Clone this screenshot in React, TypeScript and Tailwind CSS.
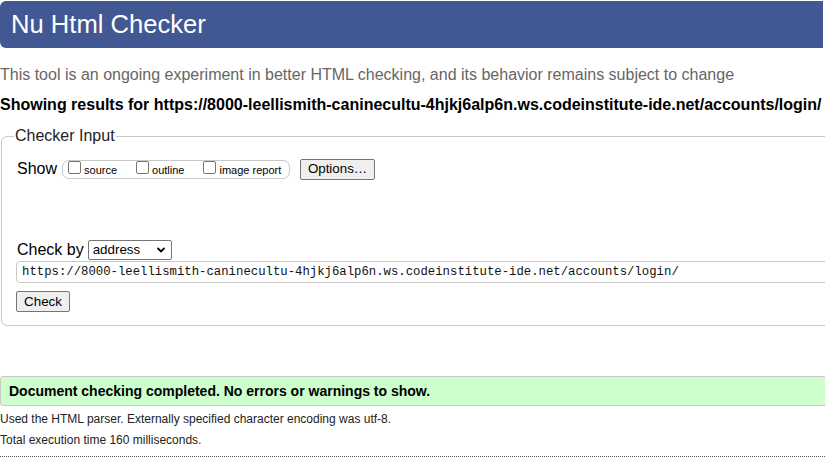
import React from "react";

export default function App() {
  const url =
    "https://8000-leellismith-caninecultu-4hjkj6alp6n.ws.codeinstitute-ide.net/accounts/login/";
  return (
    <div
      className="w-[825px] h-[458px] overflow-hidden bg-white text-black"
      style={{ fontFamily: '"Liberation Sans", Arial, sans-serif' }}
    >
      <div className="mt-[1px] h-[47px] w-[823px] rounded-l-[6px] bg-[#425892] pl-[11px] flex items-center">
        <h1 className="text-[25.6px] leading-none text-white">Nu Html Checker</h1>
      </div>

      <p className="mt-[18px] text-[16px] leading-[18px] text-[#666]">
        This tool is an ongoing experiment in better HTML checking, and its behavior remains subject to change
      </p>
      <p className="mt-[12px] text-[16px] leading-[18px] font-bold whitespace-nowrap">
        Showing results for {url}
      </p>

      <fieldset className="mt-[13px] ml-[1px] w-[860px] h-[199px] border border-[#c8c8c8] rounded-[6px] pl-[12px] pt-[13px]">
        <legend className="px-[1px] text-[16px] leading-[18px] text-[#222]">Checker Input</legend>
        <div className="pl-[3px]">
          <div className="flex items-center h-[22px]">
            <span className="text-[16px] leading-[18px] mr-[5px]">Show</span>
            <div className="flex items-center h-[19px] w-[228px] border border-[#c8c8c8] rounded-[7px] pl-[5px] text-[11px]">
              <span className="flex items-center">
                <span className="inline-block w-[13px] h-[13px] border border-[#767676] rounded-[2px] bg-white mb-[3px]" />
                <span className="ml-[3px] mt-[2px]">source</span>
              </span>
              <span className="flex items-center ml-[19px]">
                <span className="inline-block w-[13px] h-[13px] border border-[#767676] rounded-[2px] bg-white mb-[3px]" />
                <span className="ml-[3px] mt-[2px]">outline</span>
              </span>
              <span className="flex items-center ml-[19px]">
                <span className="inline-block w-[13px] h-[13px] border border-[#767676] rounded-[2px] bg-white mb-[3px]" />
                <span className="ml-[3px] mt-[2px]">image report</span>
              </span>
            </div>
            <button className="ml-[10px] h-[21px] w-[75px] border border-[#767676] rounded-[2px] bg-[#efefef] text-[13.33px] leading-none">
              Options…
            </button>
          </div>

          <div className="mt-[59px] flex items-center h-[21px]">
            <span className="text-[16px] leading-[18px] mr-[4px]">Check by</span>
            <div className="relative h-[20px] w-[84px] border border-[#767676] rounded-[2px] bg-white text-[13.33px] leading-none flex items-center pl-[4px]">
              address
              <svg className="absolute right-[5px] top-[5px]" width="10" height="8" viewBox="0 0 10 8">
                <path d="M1.5 2 L5 5.5 L8.5 2" fill="none" stroke="#000" strokeWidth="1.8" />
              </svg>
            </div>
          </div>

          <div className="mt-[1px] -ml-[1px] h-[22px] w-[830px] border border-[#c8c8c8] rounded-[4px] flex items-center pl-[5px]">
            <span
              className="text-[12.3px] leading-none text-[#111] mt-[1px]"
              style={{ fontFamily: '"Liberation Mono", "DejaVu Sans Mono", monospace' }}
            >
              {url}
            </span>
          </div>

          <button className="mt-[8px] -ml-[1px] h-[21px] w-[54px] border border-[#767676] rounded-[2px] bg-[#efefef] text-[13.33px] leading-none block">
            Check
          </button>
        </div>
      </fieldset>

      <div className="mt-[50px] h-[30px] w-[826px] bg-[#ccffcc] border border-[#c8c8c8] rounded-l-[3px] flex items-center pl-[8px]">
        <span className="text-[14px] font-bold leading-none">
          Document checking completed. No errors or warnings to show.
        </span>
      </div>

      <p className="mt-[6px] text-[12px] leading-[14px] text-[#222]">
        Used the HTML parser. Externally specified character encoding was utf-8.
      </p>
      <p className="mt-[7px] text-[12px] leading-[14px] text-[#222]">Total execution time 160 milliseconds.</p>
      <div className="mt-[9px] border-t border-dotted border-[#555]" />
    </div>
  );
}
